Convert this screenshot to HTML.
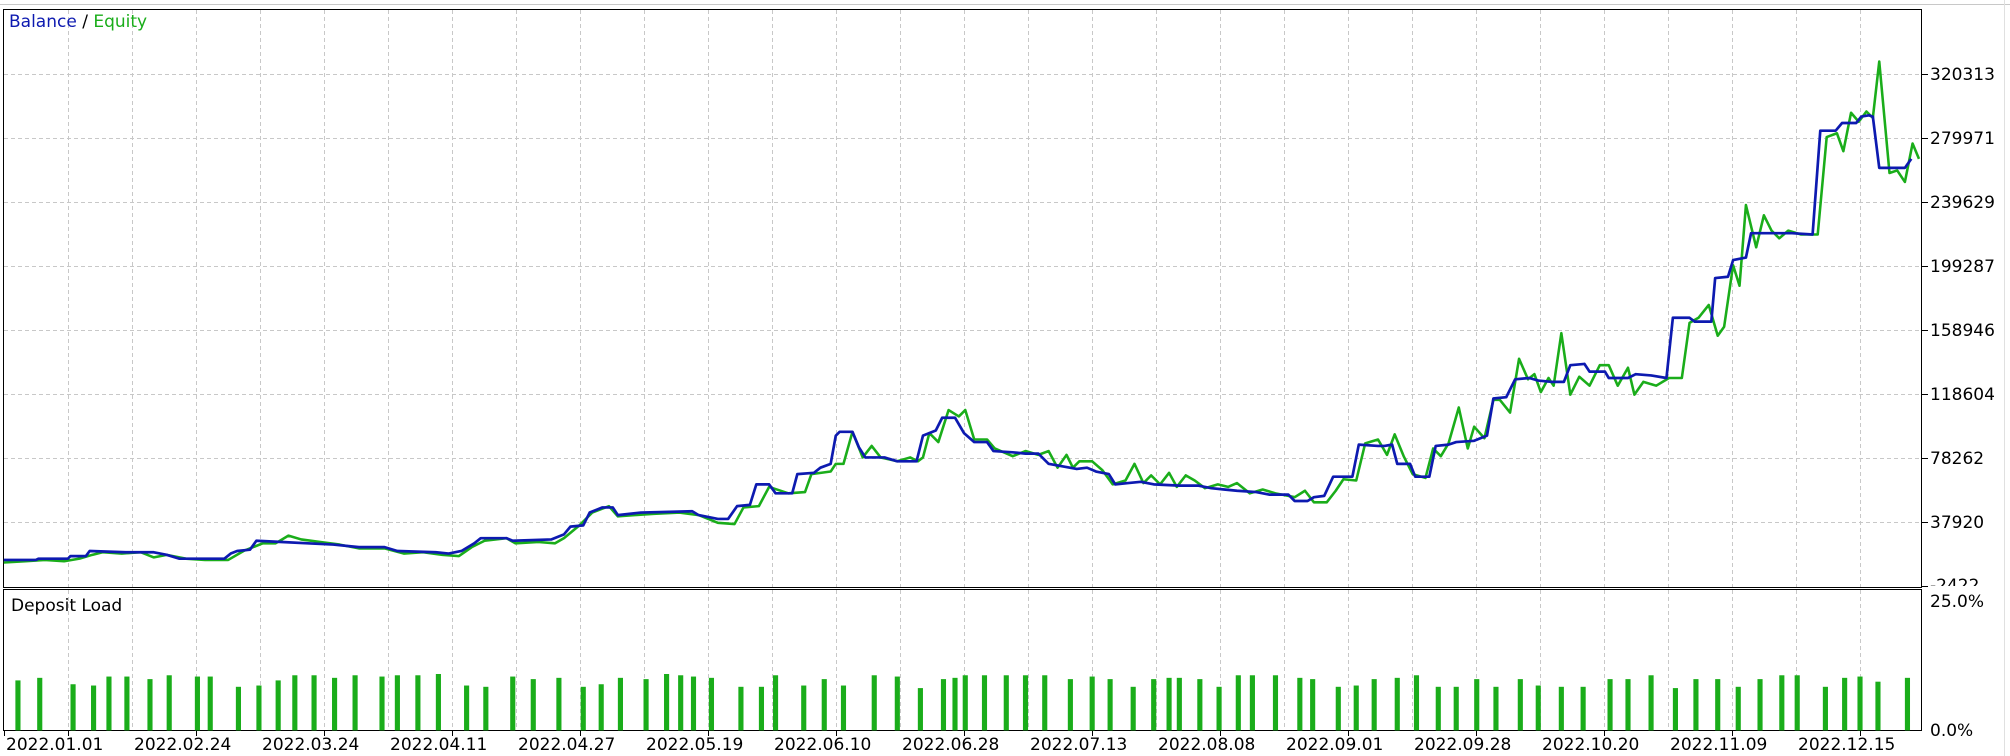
<!DOCTYPE html>
<html><head><meta charset="utf-8"><style>
html,body{margin:0;padding:0;background:#fff;}
body{width:2010px;height:756px;position:relative;overflow:hidden;font-family:"DejaVu Sans","Liberation Sans",sans-serif;}
.t{position:absolute;font-size:17px;color:#000;white-space:nowrap;line-height:20px;}
</style></head><body>
<svg width="2010" height="756" style="position:absolute;left:0;top:0" xmlns="http://www.w3.org/2000/svg" shape-rendering="crispEdges">
<line x1="0" y1="4.5" x2="2010" y2="4.5" stroke="#c8c8c8" stroke-width="1"/>
<line x1="2004.5" y1="0" x2="2004.5" y2="756" stroke="#e0e0e0" stroke-width="1"/>
<g stroke="#c8c8c8" stroke-width="1" stroke-dasharray="4,3">
<path d="M4 74.5H1921M4 138.5H1921M4 202.5H1921M4 266.5H1921M4 330.5H1921M4 394.5H1921M4 458.5H1921M4 522.5H1921"/>
<path d="M68.5 10V587M132.5 10V587M196.5 10V587M260.5 10V587M324.5 10V587M388.5 10V587M452.5 10V587M516.5 10V587M580.5 10V587M644.5 10V587M708.5 10V587M772.5 10V587M836.5 10V587M900.5 10V587M964.5 10V587M1028.5 10V587M1092.5 10V587M1156.5 10V587M1220.5 10V587M1284.5 10V587M1348.5 10V587M1412.5 10V587M1476.5 10V587M1540.5 10V587M1604.5 10V587M1668.5 10V587M1732.5 10V587M1796.5 10V587M1860.5 10V587"/>
<path d="M68.5 590V730M132.5 590V730M196.5 590V730M260.5 590V730M324.5 590V730M388.5 590V730M452.5 590V730M516.5 590V730M580.5 590V730M644.5 590V730M708.5 590V730M772.5 590V730M836.5 590V730M900.5 590V730M964.5 590V730M1028.5 590V730M1092.5 590V730M1156.5 590V730M1220.5 590V730M1284.5 590V730M1348.5 590V730M1412.5 590V730M1476.5 590V730M1540.5 590V730M1604.5 590V730M1668.5 590V730M1732.5 590V730M1796.5 590V730M1860.5 590V730"/>
</g>
<rect x="3.5" y="9.5" width="1918" height="578" fill="none" stroke="#000" stroke-width="1"/>
<rect x="3.5" y="589.5" width="1918" height="141" fill="none" stroke="#000" stroke-width="1"/>
<g stroke="#000" stroke-width="1">
<path d="M1922 74.5h6M1922 138.5h6M1922 202.5h6M1922 266.5h6M1922 330.5h6M1922 394.5h6M1922 458.5h6M1922 522.5h6M1922 586.5h6"/>
<path d="M4.5 731v5M68.5 731v5M196.5 731v5M324.5 731v5M452.5 731v5M580.5 731v5M708.5 731v5M836.5 731v5M964.5 731v5M1092.5 731v5M1220.5 731v5M1348.5 731v5M1476.5 731v5M1604.5 731v5M1732.5 731v5M1860.5 731v5"/>
</g>
</svg>
<svg width="2010" height="756" viewBox="0 0 1568 590" preserveAspectRatio="none" style="position:absolute;left:0;top:0" xmlns="http://www.w3.org/2000/svg">
<g fill="#1aad1a">
<rect x="12" y="531" width="4" height="39"/><rect x="29" y="529" width="4" height="41"/><rect x="55" y="534" width="4" height="36"/><rect x="71" y="535" width="4" height="35"/><rect x="83" y="528" width="4" height="42"/><rect x="97" y="528" width="4" height="42"/><rect x="115" y="530" width="4" height="40"/><rect x="130" y="527" width="4" height="43"/><rect x="152" y="528" width="4" height="42"/><rect x="162" y="528" width="4" height="42"/><rect x="184" y="536" width="4" height="34"/><rect x="200" y="535" width="4" height="35"/><rect x="215" y="531" width="4" height="39"/><rect x="228" y="527" width="4" height="43"/><rect x="243" y="527" width="4" height="43"/><rect x="259" y="529" width="4" height="41"/><rect x="275" y="527" width="4" height="43"/><rect x="296" y="528" width="4" height="42"/><rect x="308" y="527" width="4" height="43"/><rect x="324" y="527" width="4" height="43"/><rect x="340" y="526" width="4" height="44"/><rect x="362" y="535" width="4" height="35"/><rect x="377" y="536" width="4" height="34"/><rect x="398" y="528" width="4" height="42"/><rect x="414" y="530" width="4" height="40"/><rect x="434" y="529" width="4" height="41"/><rect x="453" y="536" width="4" height="34"/><rect x="467" y="534" width="4" height="36"/><rect x="482" y="529" width="4" height="41"/><rect x="502" y="530" width="4" height="40"/><rect x="518" y="526" width="4" height="44"/><rect x="529" y="527" width="4" height="43"/><rect x="539" y="528" width="4" height="42"/><rect x="553" y="529" width="4" height="41"/><rect x="576" y="536" width="4" height="34"/><rect x="592" y="536" width="4" height="34"/><rect x="603" y="527" width="4" height="43"/><rect x="625" y="535" width="4" height="35"/><rect x="641" y="530" width="4" height="40"/><rect x="656" y="535" width="4" height="35"/><rect x="680" y="527" width="4" height="43"/><rect x="698" y="528" width="4" height="42"/><rect x="716" y="537" width="4" height="33"/><rect x="734" y="530" width="4" height="40"/><rect x="743" y="529" width="4" height="41"/><rect x="751" y="527" width="4" height="43"/><rect x="766" y="527" width="4" height="43"/><rect x="783" y="527" width="4" height="43"/><rect x="798" y="527" width="4" height="43"/><rect x="813" y="527" width="4" height="43"/><rect x="833" y="530" width="4" height="40"/><rect x="850" y="528" width="4" height="42"/><rect x="864" y="530" width="4" height="40"/><rect x="882" y="536" width="4" height="34"/><rect x="898" y="530" width="4" height="40"/><rect x="910" y="529" width="4" height="41"/><rect x="918" y="529" width="4" height="41"/><rect x="934" y="530" width="4" height="40"/><rect x="949" y="536" width="4" height="34"/><rect x="964" y="527" width="4" height="43"/><rect x="975" y="527" width="4" height="43"/><rect x="993" y="527" width="4" height="43"/><rect x="1012" y="529" width="4" height="41"/><rect x="1022" y="530" width="4" height="40"/><rect x="1042" y="536" width="4" height="34"/><rect x="1056" y="535" width="4" height="35"/><rect x="1070" y="530" width="4" height="40"/><rect x="1088" y="529" width="4" height="41"/><rect x="1103" y="527" width="4" height="43"/><rect x="1120" y="536" width="4" height="34"/><rect x="1134" y="536" width="4" height="34"/><rect x="1150" y="530" width="4" height="40"/><rect x="1165" y="536" width="4" height="34"/><rect x="1184" y="530" width="4" height="40"/><rect x="1198" y="535" width="4" height="35"/><rect x="1216" y="536" width="4" height="34"/><rect x="1233" y="536" width="4" height="34"/><rect x="1254" y="530" width="4" height="40"/><rect x="1268" y="530" width="4" height="40"/><rect x="1286" y="527" width="4" height="43"/><rect x="1305" y="537" width="4" height="33"/><rect x="1321" y="530" width="4" height="40"/><rect x="1338" y="530" width="4" height="40"/><rect x="1354" y="536" width="4" height="34"/><rect x="1371" y="530" width="4" height="40"/><rect x="1388" y="527" width="4" height="43"/><rect x="1400" y="527" width="4" height="43"/><rect x="1422" y="536" width="4" height="34"/><rect x="1437" y="529" width="4" height="41"/><rect x="1449" y="528" width="4" height="42"/><rect x="1463" y="532" width="4" height="38"/><rect x="1486" y="529" width="4" height="41"/>
</g>
<polyline fill="none" stroke="#1aad1a" stroke-width="2" stroke-linejoin="round" points="3,439 20,438 35,437 50,438 62,436 72,433 80,431 95,432 110,431 120,435 130,433 145,436 160,437 178,437 190,430 205,424 215,424 225,418 235,421 250,423 265,425 280,428 300,428 315,432 330,431 345,433 358,434 368,427 378,422 395,420 402,424 420,423 433,424 440,420 452,410 462,400 475,395 482,403 495,402 510,401 530,400 545,402 560,408 573,409 580,396 592,395 600,380 615,385 628,384 633,370 648,368 652,362 658,362 665,337 673,357 680,348 687,357 700,360 710,357 716,360 720,357 725,338 732,345 740,320 748,325 753,320 760,343 770,343 776,350 790,356 800,352 810,355 818,352 825,365 832,355 837,365 842,360 852,360 860,367 868,378 878,375 885,362 892,377 898,371 905,378 912,369 918,380 925,371 932,375 940,381 950,378 958,380 965,377 975,385 985,382 995,385 1010,388 1018,383 1025,392 1035,392 1042,383 1048,374 1058,375 1065,346 1075,343 1082,355 1088,339 1095,356 1102,370 1112,373 1118,350 1124,356 1130,346 1138,318 1145,350 1150,333 1158,342 1165,312 1170,312 1178,322 1185,280 1192,296 1197,292 1202,306 1208,295 1212,301 1218,260 1225,308 1232,294 1240,301 1248,285 1255,285 1262,301 1270,287 1275,308 1282,298 1292,301 1302,295 1312,295 1318,252 1325,248 1333,238 1340,262 1345,255 1352,207 1357,223 1362,160 1370,193 1376,168 1382,180 1388,186 1395,180 1405,183 1418,183 1425,107 1433,104 1438,118 1444,88 1450,95 1456,87 1461,92 1466,48 1474,135 1480,133 1486,142 1492,112 1497,124"/>
<polyline fill="none" stroke="#0d1ab0" stroke-width="2.1" stroke-linejoin="round" points="3,437 28,437 30,436 53,436 55,434 67,434 70,430 98,431 120,431 130,433 140,436 175,436 180,432 185,430 195,429 200,422 220,423 240,424 260,425 280,427 300,427 310,430 340,431 350,432 360,430 370,424 375,420 395,420 400,422 430,421 440,417 445,411 455,410 460,400 470,396 478,396 482,402 500,400 540,399 545,402 560,405 568,405 575,395 585,394 590,378 600,378 605,385 618,385 622,370 635,369 640,365 648,362 652,340 655,337 665,337 670,349 675,357 690,357 700,360 715,360 720,340 730,336 735,326 745,326 752,338 760,345 770,345 775,352 790,353 800,354 810,354 818,362 840,366 848,365 855,368 865,370 870,378 880,377 890,376 900,378 920,379 935,379 945,381 955,382 965,383 980,384 990,386 1005,386 1010,391 1020,391 1025,388 1033,387 1040,372 1055,372 1060,347 1075,348 1080,348 1086,347 1090,362 1100,362 1104,372 1115,372 1120,348 1130,347 1136,345 1150,344 1160,340 1165,311 1175,310 1178,304 1182,296 1193,295 1200,297 1210,298 1220,298 1225,285 1236,284 1240,290 1252,290 1255,295 1270,295 1276,292 1288,293 1300,295 1305,248 1318,248 1322,251 1335,251 1338,217 1348,216 1352,203 1362,201 1366,182 1382,182 1398,182 1414,183 1420,102 1432,102 1437,96 1448,96 1452,91 1458,90 1461,91 1466,131 1486,131 1491,124"/>
</svg>
<div class="t" style="left:9px;top:12px;font-size:17px"><span style="color:#0d1ab0">Balance</span> / <span style="color:#1aad1a">Equity</span></div>
<div class="t" style="left:11px;top:596px">Deposit Load</div>
<div class="t" style="left:1930px;top:65px">320313</div>
<div class="t" style="left:1930px;top:129px">279971</div>
<div class="t" style="left:1930px;top:193px">239629</div>
<div class="t" style="left:1930px;top:257px">199287</div>
<div class="t" style="left:1930px;top:321px">158946</div>
<div class="t" style="left:1930px;top:385px">118604</div>
<div class="t" style="left:1930px;top:449px">78262</div>
<div class="t" style="left:1930px;top:513px">37920</div>
<div class="t" style="left:1930px;top:576px;height:10px;overflow:hidden">-2422</div>
<div class="t" style="left:1930px;top:592px">25.0%</div>
<div class="t" style="left:1930px;top:721px">0.0%</div>
<div class="t" style="left:6px;top:735px">2022.01.01</div>
<div class="t" style="left:134px;top:735px">2022.02.24</div>
<div class="t" style="left:262px;top:735px">2022.03.24</div>
<div class="t" style="left:390px;top:735px">2022.04.11</div>
<div class="t" style="left:518px;top:735px">2022.04.27</div>
<div class="t" style="left:646px;top:735px">2022.05.19</div>
<div class="t" style="left:774px;top:735px">2022.06.10</div>
<div class="t" style="left:902px;top:735px">2022.06.28</div>
<div class="t" style="left:1030px;top:735px">2022.07.13</div>
<div class="t" style="left:1158px;top:735px">2022.08.08</div>
<div class="t" style="left:1286px;top:735px">2022.09.01</div>
<div class="t" style="left:1414px;top:735px">2022.09.28</div>
<div class="t" style="left:1542px;top:735px">2022.10.20</div>
<div class="t" style="left:1670px;top:735px">2022.11.09</div>
<div class="t" style="left:1798px;top:735px">2022.12.15</div>
</body></html>
